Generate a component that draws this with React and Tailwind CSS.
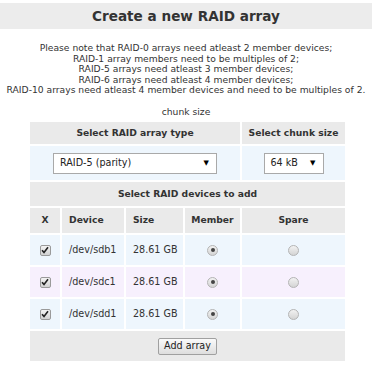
const devices = [
  { name: "/dev/sdb1", size: "28.61 GB", bg: "bg-[#eef6fd]" },
  { name: "/dev/sdc1", size: "28.61 GB", bg: "bg-[#f7f0fd]" },
  { name: "/dev/sdd1", size: "28.61 GB", bg: "bg-[#eef6fd]" },
];

const notes = [
  "Please note that RAID-0 arrays need atleast 2 member devices;",
  "RAID-1 array members need to be multiples of 2;",
  "RAID-5 arrays need atleast 3 member devices;",
  "RAID-6 arrays need atleast 4 member devices;",
  "RAID-10 arrays need atleast 4 member devices and need to be multiples of 2.",
];

const Check = () => (
  <span className="flex h-[11px] w-[11px] items-center justify-center rounded-[2px] border border-[#9a9a9a] bg-gradient-to-b from-[#f4f4f4] to-[#d2d2d2]">
    <svg width="8" height="8" viewBox="0 0 8 8">
      <path d="M1 4.2 L3 6.4 L7 1.2" fill="none" stroke="#222" strokeWidth="1.6" />
    </svg>
  </span>
);

const Radio = ({ on }) => (
  <span className="flex h-[11px] w-[11px] items-center justify-center rounded-full border border-[#b4b4b4] bg-gradient-to-b from-[#f2f2f2] to-[#d4d4d4]">
    {on && <span className="h-[4px] w-[4px] rounded-full bg-[#444]" />}
  </span>
);

const Arrow = () => <span className="text-[7px] leading-none text-black">▼</span>;

export default function App() {
  return (
    <div className="flex flex-col bg-white text-[#333] font-['DejaVu_Sans',sans-serif] text-[9.6px] leading-[10.5px]">
      <div className="mt-[3px] flex h-[26px] items-center justify-center bg-[#ececec] text-[13.6px] font-bold text-[#333]">
        Create a new RAID array
      </div>

      <div className="mt-[14px] flex flex-col items-center whitespace-nowrap text-[9.2px]">
        {notes.map((n) => (
          <div key={n}>{n}</div>
        ))}
      </div>

      <div className="mt-[11px] text-center text-[9.2px]">chunk size</div>

      <div className="mx-[30px] mt-[5px] grid grid-cols-[30px_62px_57px_55px_103px] gap-[2px] [&>div]:flex [&>div]:items-center">
        <div className="col-span-4 h-[22px] justify-center bg-[#eaeaea] text-[9.2px] font-bold">Select RAID array type</div>
        <div className="h-[22px] justify-center bg-[#eaeaea] text-[9.2px] font-bold">Select chunk size</div>

        <div className="col-span-4 h-[34px] justify-center bg-[#eef6fd]">
          <div className="flex h-[21px] w-[164px] items-center justify-between border border-[#a9a9a9] bg-white pl-[6px] pr-[7px] text-[#222]">
            <span>RAID-5 (parity)</span>
            <Arrow />
          </div>
        </div>
        <div className="h-[34px] justify-center bg-[#eef6fd]">
          <div className="flex h-[21px] w-[60px] items-center justify-between border border-[#a9a9a9] bg-white pl-[6px] pr-[7px] text-[#222]">
            <span>64 kB</span>
            <Arrow />
          </div>
        </div>

        <div className="col-span-5 h-[24px] justify-center bg-[#eaeaea] text-[9.2px] font-bold">Select RAID devices to add</div>

        <div className="h-[25px] justify-center bg-[#eaeaea] text-[9.2px] font-bold">X</div>
        <div className="h-[25px] bg-[#eaeaea] pl-[7px] text-[9.2px] font-bold">Device</div>
        <div className="h-[25px] bg-[#eaeaea] pl-[7px] text-[9.2px] font-bold">Size</div>
        <div className="h-[25px] justify-center bg-[#eaeaea] text-[9.2px] font-bold">Member</div>
        <div className="h-[25px] justify-center bg-[#eaeaea] text-[9.2px] font-bold">Spare</div>

        {devices.map((d) => [
          <div key={d.name + "x"} className={`h-[30px] justify-center ${d.bg}`}><Check /></div>,
          <div key={d.name + "n"} className={`h-[30px] pl-[7px] ${d.bg}`}>{d.name}</div>,
          <div key={d.name + "s"} className={`h-[30px] pl-[7px] ${d.bg}`}>{d.size}</div>,
          <div key={d.name + "m"} className={`h-[30px] justify-center ${d.bg}`}><Radio on /></div>,
          <div key={d.name + "p"} className={`h-[30px] justify-center ${d.bg}`}><Radio /></div>,
        ])}

        <div className="col-span-5 h-[30px] justify-center bg-[#eaeaea]">
          <button className="flex h-[17px] w-[59px] items-center justify-center rounded-[2px] border border-[#a0a0a0] bg-gradient-to-b from-[#fafafa] to-[#dedede] text-[9.6px] text-[#222]">
            Add array
          </button>
        </div>
      </div>
    </div>
  );
}
